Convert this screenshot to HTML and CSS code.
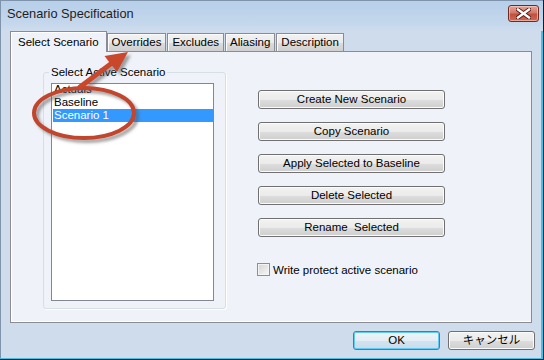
FILE: index.html
```html
<!DOCTYPE html>
<html lang="en">
<head>
    <meta charset="UTF-8">
    <meta name="viewport" content="width=device-width, initial-scale=1.0">
    <title>Scenario Specification</title>
    <link rel="stylesheet" href="styles.css">
</head>
<body>
    <div class="window">
        <div class="titlebar">
            <span class="title">Scenario Specification</span>
            <span class="close">
                <svg width="15" height="11" viewBox="0 0 15 11">
                    <path d="M2 1.5 L13 9.5 M13 1.5 L2 9.5" stroke="#5a1a14" stroke-width="4.2" stroke-linecap="square"/>
                    <path d="M2 1.5 L13 9.5 M13 1.5 L2 9.5" stroke="#fff" stroke-width="2.4" stroke-linecap="square"/>
                </svg>
            </span>
        </div>

        <div class="content">
            <div class="tabs">
                <div class="tab active">Select Scenario</div>
                <div class="tab">Overrides</div>
                <div class="tab">Excludes</div>
                <div class="tab">Aliasing</div>
                <div class="tab">Description</div>
            </div>

            <div class="panel">
                <fieldset class="group">
                    <legend>Select Active Scenario</legend>
                    <div class="listbox">
                        <div class="item">Actuals</div>
                        <div class="item">Baseline</div>
                        <div class="item selected">Scenario 1</div>
                    </div>
                </fieldset>

                <div class="actions">
                    <button class="btn">Create New Scenario</button>
                    <button class="btn">Copy Scenario</button>
                    <button class="btn">Apply Selected to Baseline</button>
                    <button class="btn">Delete Selected</button>
                    <button class="btn">Rename&nbsp; Selected</button>
                    <label class="check"><span class="box"></span>Write protect active scenario</label>
                </div>
            </div>

            <div class="footer">
                <button class="btn default">OK</button>
                <button class="btn">キャンセル</button>
            </div>
        </div>

        <!-- red callout drawn on top of the dialog -->
        <svg class="annotation" width="544" height="360" viewBox="0 0 544 360">
            <defs>
                <filter id="shade" x="-20%" y="-20%" width="140%" height="140%">
                    <feDropShadow dx="3" dy="3" stdDeviation="1.6" flood-color="#555" flood-opacity="0.55"/>
                </filter>
            </defs>
            <g filter="url(#shade)">
                <ellipse cx="84" cy="113" rx="50" ry="25" fill="none" stroke="#c2452d" stroke-width="4"/>
                <line x1="80" y1="87" x2="112" y2="63" stroke="#c9472b" stroke-width="5" stroke-linecap="round"/>
                <polygon points="128,52 104.5,56 117,72" fill="#c9472b"/>
            </g>
        </svg>
    </div>
</body>
</html>
```

FILE: styles.css
```css
body{
    margin: 0;
    font-family: "Liberation Sans", Arial, "Noto Sans CJK JP", sans-serif;
    font-size: 11.5px;
    color: black;
    background: white;
}
.window{
    position: relative;
    width: 544px;
    height: 360px;
    box-sizing: border-box;
    background-color: #cfdcec;
    border-right: 1px solid #1b1b1b;
    border-bottom: 1px solid #1b1b1b;
    box-shadow: inset -2px -1px 0 #3cc4ea, inset 1px 1px 0 #7f93ab;
    overflow: hidden;
}
.titlebar{
    display: flex;
    align-items: flex-start;
    height: 31px;
    background: linear-gradient(#b7cfea, #c3d6ec 70%, #cfdcec);
    box-shadow: inset 1px 1px 0 #7f93ab;
}
.title{
    font-size: 12.8px;
    line-height: 15px;
    padding: 6px 0 0 7px;
    color: #1e1e1e;
}
.close{
    display: flex;
    align-items: center;
    justify-content: center;
    margin: 5px 4px 0 auto;
    width: 31px;
    height: 17px;
    box-sizing: border-box;
    border: 1px solid #6e2b24;
    border-radius: 3px;
    background: linear-gradient(#e6a497, #d4796a 45%, #c2503f 55%, #cf6a55);
    box-shadow: inset 0 0 0 1px rgba(255, 220, 210, 0.55);
}
.content{
    padding: 0 11px 0 10px;
}
.tabs{
    display: flex;
    align-items: flex-end;
    gap: 1px;
    height: 21px;
    margin-bottom: -1px;
    position: relative;
}
.tab{
    height: 18px;
    line-height: 16px;
    box-sizing: border-box;
    padding: 0 4px;
    margin-bottom: 1px;
    border: 1px solid #898c95;
    border-bottom: none;
    background: linear-gradient(#f2f2f2, #ebebeb 50%, #dddddd 51%, #cfcfcf);
    box-shadow: inset 1px 1px 0 #fbfbfb;
}
.tab.active{
    height: 21px;
    line-height: 20px;
    margin-bottom: 0;
    margin-right: -1px;
    padding: 0 7px;
    background: #eff3f9;
    box-shadow: inset 1px 1px 0 white;
}
.panel{
    display: flex;
    align-items: flex-start;
    height: 272px;
    box-sizing: border-box;
    padding: 13px 0 0 32px;
    border: 1px solid #898c95;
    background-color: #eff3f9;
    box-shadow: inset 1px 0 0 white, inset 0 -1px 0 white;
}
.group{
    width: 183px;
    box-sizing: border-box;
    margin: 0;
    padding: 0 11px 7px 7px;
    border: 1px solid #d5dfe5;
    border-radius: 3px;
    box-shadow: 1px 1px 0 white;
}
.group legend{
    padding: 0 2px;
    margin-left: -2px;
    line-height: 14px;
}
.listbox{
    margin-top: 4px;
    height: 218px;
    box-sizing: border-box;
    border: 1px solid #828790;
    background: white;
    overflow: hidden;
}
.item{
    line-height: 13px;
    height: 13px;
    padding-left: 1px;
    margin-left: 1px;
}
.item:first-child{
    margin-top: -1px;
}
.item.selected{
    background-color: #3399ff;
    color: white;
}
.actions{
    display: flex;
    flex-direction: column;
    gap: 13px;
    margin-left: 32px;
    padding-top: 25px;
}
.btn{
    font: inherit;
    color: black;
    width: 187px;
    height: 19px;
    padding: 0;
    line-height: 17px;
    border: 1px solid #707070;
    border-radius: 3px;
    background: linear-gradient(#f2f2f2, #ebebeb 50%, #dddddd 51%, #cfcfcf);
    box-shadow: inset 0 0 0 1px #fbfbfb;
}
.check{
    display: flex;
    align-items: center;
    margin-top: 13px;
    margin-left: -1px;
    height: 13px;
}
.box{
    width: 13px;
    height: 13px;
    box-sizing: border-box;
    margin-right: 3px;
    border: 1px solid #8f8f8f;
    background: linear-gradient(135deg, #d4d4d4, #f7f7f7);
    box-shadow: inset 0 0 0 1px #f4f4f4;
}
.footer{
    display: flex;
    justify-content: flex-end;
    gap: 8px;
    margin: 8px -3px 0 0;
}
.footer .btn{
    width: 87px;
}
.btn.default{
    border-color: #3c7fb1;
    background: linear-gradient(#eef5fa, #e3edf5 50%, #d3e3ef 51%, #c8dcec);
    box-shadow: inset 0 0 0 1px #5fcaf3;
}
.annotation{
    position: absolute;
    left: 0;
    top: 0;
    pointer-events: none;
}
```
